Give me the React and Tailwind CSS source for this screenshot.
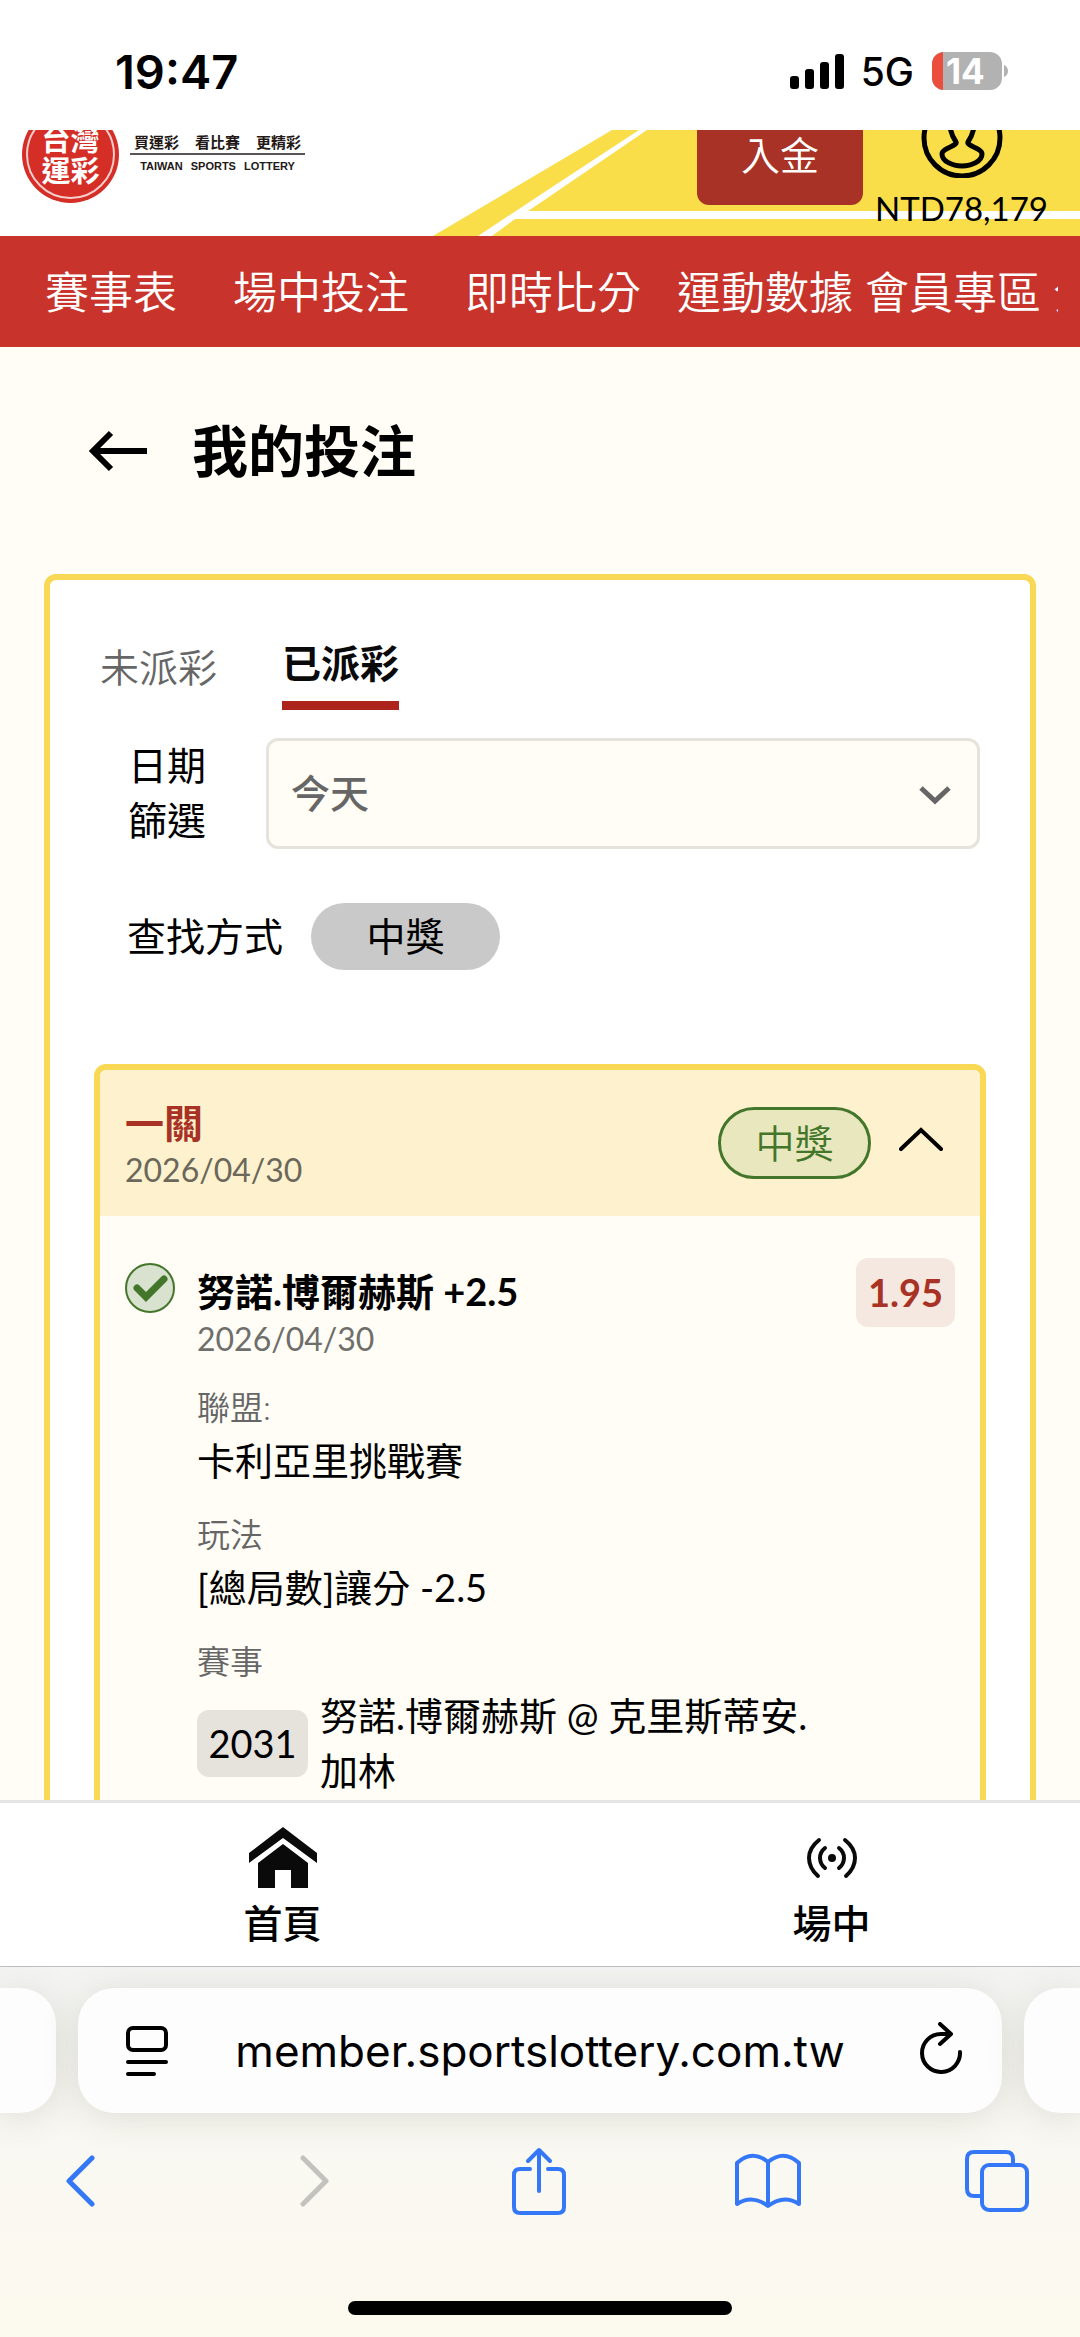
import { useState } from 'react'

const navItems = [
  { label: '賽事表', gap: '' },
  { label: '場中投注', gap: 'ml-14' },
  { label: '即時比分', gap: 'ml-14' },
  { label: '運動數據', gap: 'ml-9' },
  { label: '會員專區', gap: 'ml-3' },
  { label: '分析', gap: 'ml-3' },
]

const bet = {
  type: '一關',
  date: '2026/04/30',
  status: '中獎',
  pick: '努諾.博爾赫斯 +2.5',
  odds: '1.95',
  league: '卡利亞里挑戰賽',
  market: '[總局數]讓分 -2.5',
  matchNo: '2031',
  match: '努諾.博爾赫斯 @ 克里斯蒂安.加林',
}

// ─── iOS status bar ────────────────────────────────
function StatusBar() {
  return (
    <div className="flex h-[130px] shrink-0 items-center justify-between bg-white pt-3 pr-[72px] pb-0 pl-[115px] font-['Inter',sans-serif] text-black">
      <span className="text-[47px] leading-none font-semibold">19:47</span>
      <div className="flex items-center">
        <svg width="54" height="35" viewBox="0 0 54 35">
          <rect x="0" y="22" width="9" height="13" rx="3" />
          <rect x="15" y="15" width="9" height="20" rx="3" />
          <rect x="30" y="8" width="9" height="27" rx="3" />
          <rect x="45" y="0" width="9" height="35" rx="3" />
        </svg>
        <span className="ml-[17px] text-[39px] leading-none font-medium">5G</span>
        <div className="ml-[18px] flex h-[38px] w-[70px] items-center overflow-hidden rounded-xl bg-[#b2b2b2]">
          <span className="h-full w-[11px] bg-[#eb4e3d]"></span>
          <span className="ml-[3px] text-[35px] leading-none font-bold text-white">14</span>
        </div>
        <svg className="ml-0.5" width="4" height="12" viewBox="0 0 4 12">
          <path d="M0 0C3 1 4 4 4 6s-1 5-4 6z" fill="#b2b2b2" />
        </svg>
      </div>
    </div>
  )
}

// ─── Site header, scrolled partly under the status bar ─────
function SiteHeader() {
  return (
    <header className="relative flex h-[106px] shrink-0 items-end justify-between overflow-hidden bg-white">
      <svg className="absolute top-0 right-0" width="650" height="106" viewBox="430 130 650 106">
        <path d="M433 236 612 130h468v106z" fill="#f9de49" />
        <path d="M478 236 540 195 639 130h8l-107 73-12 8h552v8H515l-23 17z" fill="#fff" />
      </svg>

      <a href="#home" className="relative ml-[22px] flex h-[130px] items-start gap-[11px]">
        <span className="flex h-[97px] w-[97px] items-center justify-center rounded-full bg-[#d42e27] p-1">
          <span className="flex h-full w-full flex-col items-center justify-center rounded-full border-2 border-[#f6cdca] text-[29px] leading-[31px] font-bold text-white">
            <span>台灣</span>
            <span>運彩</span>
          </span>
        </span>
        <span className="mt-[25px] flex flex-col text-[#231815]">
          <span className="flex justify-center gap-4 border-b-2 border-[#5a5454] px-1 text-[15px] leading-[22px] font-bold">
            <span>買運彩</span>
            <span>看比賽</span>
            <span>更精彩</span>
          </span>
          <span className="mt-1 flex justify-center gap-2 font-['Liberation_Sans',sans-serif] text-[11px] leading-[14px] font-bold">
            <span>TAIWAN</span>
            <span>SPORTS</span>
            <span>LOTTERY</span>
          </span>
        </span>
      </a>

      <div className="relative flex items-end pr-8">
        <button className="mr-3 mb-[31px] h-[100px] w-[166px] rounded-xl bg-[#a73225] text-[39px] leading-[40px] font-[350] text-white">
          入金
        </button>
        <a href="#account" className="flex flex-col items-center text-[33px] leading-[40px] text-black">
          <svg width="82" height="82" viewBox="0 0 82 82" fill="none" stroke="#000" strokeWidth="5">
            <circle cx="41" cy="42" r="38" />
            <path
              d="M41 13c-8 0-13 6-13 13 0 3 1 6 2 9 1 5 3 8 5 11 2 4-14 6-14 12 0 7 10 12 20 12s20-5 20-12c0-6-16-8-14-12 2-3 4-6 5-11 1-3 2-6 2-9 0-7-5-13-13-13z"
              strokeLinejoin="round"
            />
          </svg>
          <span className="mt-2.5 mb-2">NTD78,179</span>
        </a>
      </div>
    </header>
  )
}

function MainNav() {
  return (
    <nav className="shrink-0 bg-[#c8342b] pr-[22px] pl-[45px]">
      <div className="flex h-[111px] items-center overflow-hidden text-[44px] leading-[60px] font-[350] whitespace-nowrap text-white">
        {navItems.map((item) => (
          <a key={item.label} href="#nav" className={`shrink-0 ${item.gap}`}>
            {item.label}
          </a>
        ))}
      </div>
    </nav>
  )
}

function Detail({ label, children }) {
  return (
    <div>
      <dt className="text-[33px] leading-[46px] font-[350] text-[#666]">{label}</dt>
      <dd className="text-[38px] leading-[60px]">{children}</dd>
    </div>
  )
}

function BetCard() {
  const [open, setOpen] = useState(true)

  return (
    <article className="mt-[94px] overflow-hidden rounded-xl border-[6px] border-[#f9d856] bg-[#fffdf5]">
      <div className="flex items-center bg-[#fdf2cd] py-[26px] pr-[37px] pl-[25px]">
        <div className="flex-1">
          <h2 className="text-[39px] leading-[54px] font-bold text-[#a73225]">{bet.type}</h2>
          <p className="text-[32px] leading-[40px] text-[#6b675b]">{bet.date}</p>
        </div>
        <span className="flex h-[72px] w-[153px] items-center justify-center rounded-full border-[3px] border-[#43762b] bg-[#e8e7bd] text-[39px] font-[350] text-[#43762b]">
          {bet.status}
        </span>
        <button className="ml-7" aria-label="收合" aria-expanded={open} onClick={() => setOpen(!open)}>
          <svg className="mb-2" width="44" height="26" viewBox="0 0 44 26" fill="none" stroke="#000" strokeWidth="4" strokeLinecap="round">
            <path d="M2 23 22 4l20 19" />
          </svg>
        </button>
      </div>

      {open && (
        <div className="flex items-start pt-[42px] pr-[25px] pb-12 pl-[25px]">
          <svg className="mt-[5px] shrink-0" width="50" height="50" viewBox="0 0 50 50" fill="none" stroke="#43762b">
            <circle cx="25" cy="25" r="24" fill="#d8e2cf" strokeWidth="2" />
            <path d="M12 25l9 9 18-18" strokeWidth="7" strokeLinecap="round" />
          </svg>
          <div className="mt-1.5 ml-[22px] flex-1">
            <h3 className="text-[38px] leading-[54px] font-bold">{bet.pick}</h3>
            <p className="text-[32px] leading-[42px] text-[#6e6e6c]">{bet.date}</p>
            <dl className="mt-6 flex flex-col gap-[21px]">
              <Detail label="聯盟:">{bet.league}</Detail>
              <Detail label="玩法">{bet.market}</Detail>
              <div>
                <dt className="text-[33px] leading-[46px] font-[350] text-[#666]">賽事</dt>
                <dd className="mt-1 flex max-w-[630px] items-center gap-3 text-[38px] leading-[55px]">
                  <span className="flex h-[67px] w-[111px] shrink-0 items-center justify-center rounded-xl bg-[#e5e3dc]">
                    {bet.matchNo}
                  </span>
                  <span>{bet.match}</span>
                </dd>
              </div>
            </dl>
          </div>
          <span className="flex h-[69px] w-[99px] items-center justify-center rounded-xl bg-[#f5e8e0] text-[38px] font-bold text-[#a73225]">
            {bet.odds}
          </span>
        </div>
      )}
    </article>
  )
}

function MyBets() {
  const [tab, setTab] = useState('settled')

  return (
    <main className="min-h-0 flex-1 overflow-hidden bg-[#fffdf5] px-[44px]">
      <div className="flex items-center gap-[45px] pt-[66px] pb-[85px] pl-[44px]">
        <button aria-label="返回">
          <svg width="59" height="42" viewBox="0 0 59 42" fill="none" stroke="#000" strokeWidth="6">
            <path d="M59 21H6M23 3 5 21l18 18" />
          </svg>
        </button>
        <h1 className="text-[56px] leading-[76px] font-bold">我的投注</h1>
      </div>

      <section className="rounded-xl border-[6px] border-[#f9d856] bg-white px-[44px] pt-[55px] pb-16">
        <div className="flex items-start gap-[65px] pl-1.5 text-[39px] leading-[56px]" role="tablist">
          {[
            { id: 'open', label: '未派彩' },
            { id: 'settled', label: '已派彩' },
          ].map((t) => (
            <button
              key={t.id}
              role="tab"
              aria-selected={tab === t.id}
              onClick={() => setTab(t.id)}
              className={
                tab === t.id
                  ? 'border-b-[9px] border-[#ac241c] pb-2.5 font-bold text-[#0a0a0a]'
                  : 'pt-1 font-[350] text-[#666]'
              }
            >
              {t.label}
            </button>
          ))}
        </div>

        <div className="mt-7 flex pr-1.5 pl-[33px] text-[39px] leading-[55px]">
          <label htmlFor="date-range" className="mr-[60px] w-[79px] shrink-0 text-right">
            日期 篩選
          </label>
          <div className="relative h-[111px] flex-1">
            <select
              id="date-range"
              className="h-full w-full appearance-none rounded-xl border-[3px] border-[#e5e3dc] bg-[#fffdf5] px-[22px] font-medium text-[#666]"
            >
              <option>今天</option>
              <option>昨天</option>
              <option>最近七天</option>
            </select>
            <svg className="pointer-events-none absolute top-[47px] right-7" width="34" height="22" viewBox="0 0 34 22" fill="none" stroke="#666" strokeWidth="5">
              <path d="M3 3 17 16 31 3" />
            </svg>
          </div>
        </div>

        <div className="mt-[54px] flex items-center gap-7 pl-[33px] text-[39px] leading-[55px]">
          <span>查找方式</span>
          <button className="h-[67px] w-[189px] rounded-full bg-[#c9c9c9]">中獎</button>
        </div>

        <BetCard />
      </section>
    </main>
  )
}

function BottomTabs() {
  return (
    <nav className="shrink-0 overflow-hidden border-t-[3px] border-b border-t-[#e5e5e5] border-b-[#bdbdbd] bg-white">
      <div className="-mr-[26px] grid grid-cols-2 pl-2 text-[39px] leading-[50px] font-medium">
        <a href="#home" className="flex h-[163px] flex-col items-center pt-6">
          <svg width="68" height="61" viewBox="0 0 68 61" fill="#0a0a0a">
            <path d="M34 0 68 26v10L34 11 0 36V26z" />
            <path d="M34 17 59 36v25H42V43H26v18H9V36z" />
          </svg>
          <span className="mt-2.5">首頁</span>
        </a>
        <a href="#live" className="flex h-[163px] flex-col items-center pt-6">
          <svg width="50" height="61" viewBox="0 0 50 61" fill="none" stroke="#0a0a0a" strokeWidth="4" strokeLinecap="round">
            <circle cx="25" cy="31" r="4" fill="#0a0a0a" stroke="none" />
            <path d="M12 13Q2 21 2 31t9 18M38 13q10 8 10 18t-9 18M18 21q-5 4-5 10t5 10M32 21q5 4 5 10t-5 10" />
          </svg>
          <span className="mt-2.5">場中</span>
        </a>
      </div>
    </nav>
  )
}

// ─── Safari address bar and toolbar ────────────────
function BrowserBar() {
  const pill = 'h-[125px] bg-[#fdfdfd] shadow-[0_4px_36px_rgba(90,90,70,0.16)]'

  return (
    <footer className="shrink-0 overflow-hidden bg-linear-to-b from-[#f4f4f2] via-[#f9f8f2] to-[#fcfaee] pt-[21px]">
      <div className="flex gap-[22px]">
        <span className={`w-14 shrink-0 rounded-r-[36px] ${pill}`}></span>
        <div className={`flex flex-1 items-center justify-between rounded-[36px] pr-10 pl-12 ${pill}`}>
          <button aria-label="頁面選單">
            <svg width="42" height="50" viewBox="0 0 42 50" fill="none" stroke="#000" strokeWidth="4" strokeLinecap="round">
              <rect x="2" y="2" width="38" height="22" rx="5" />
              <path d="M2 36h38M2 48h26" />
            </svg>
          </button>
          <span className="pr-2 font-['Inter',sans-serif] text-[44px] leading-none text-black">member.sportslottery.com.tw</span>
          <button aria-label="重新載入">
            <svg className="mb-1.5" width="42" height="52" viewBox="0 0 42 52" fill="none" stroke="#000" strokeWidth="4" strokeLinecap="round" strokeLinejoin="round">
              <path d="M40 30A19 19 0 1 1 21 12h9M20 2l11 10-11 10" />
            </svg>
          </button>
        </div>
        <span className={`w-14 shrink-0 rounded-l-[36px] ${pill}`}></span>
      </div>

      <div className="flex h-[136px] items-center justify-between pr-[50px] pl-[47px] text-[#3478f7]">
        <button aria-label="上一頁" className="flex w-[66px] justify-center">
          <svg width="30" height="52" viewBox="0 0 30 52" fill="none" stroke="currentColor" strokeWidth="5" strokeLinecap="round" strokeLinejoin="round">
            <path d="M27 3 4 26l23 23" />
          </svg>
        </button>
        <button aria-label="下一頁" disabled className="flex w-[66px] justify-center pl-3 text-[#c3c2be]">
          <svg width="30" height="52" viewBox="0 0 30 52" fill="none" stroke="currentColor" strokeWidth="5" strokeLinecap="round" strokeLinejoin="round">
            <path d="M3 3l23 23L3 49" />
          </svg>
        </button>
        <button aria-label="分享" className="flex w-[66px] justify-center">
          <svg width="54" height="68" viewBox="0 0 54 68" fill="none" stroke="currentColor" strokeWidth="4" strokeLinecap="round" strokeLinejoin="round">
            <path d="M18 22H8q-6 0-6 6v32q0 6 6 6h38q6 0 6-6V28q0-6-6-6H36M27 44V3M16 14 27 3l11 11" />
          </svg>
        </button>
        <button aria-label="書籤" className="flex w-[66px] justify-center">
          <svg width="66" height="56" viewBox="0 0 66 56" fill="none" stroke="currentColor" strokeWidth="4" strokeLinecap="round" strokeLinejoin="round">
            <path d="M33 53Q17 41 2 51V10Q17-4 33 9Q49-4 64 10V51Q49 41 33 53zM33 9V53" />
          </svg>
        </button>
        <button aria-label="分頁" className="flex w-[66px] justify-center">
          <svg width="64" height="62" viewBox="0 0 64 62" fill="none" stroke="currentColor" strokeWidth="4">
            <path d="M16 46H9q-7 0-7-7V9q0-7 7-7h32q7 0 7 7v6" />
            <rect x="17" y="15" width="45" height="45" rx="7" />
          </svg>
        </button>
      </div>

      <div className="flex justify-center pt-[52px] pb-[22px]">
        <span className="h-3.5 w-[384px] rounded-full bg-black"></span>
      </div>
    </footer>
  )
}

export default function App() {
  return (
    <div lang="zh-Hant" className="flex h-screen flex-col overflow-hidden bg-white font-['Lato','Noto_Sans_CJK_TC',sans-serif] text-black">
      <StatusBar />
      <SiteHeader />
      <MainNav />
      <MyBets />
      <BottomTabs />
      <BrowserBar />
    </div>
  )
}
